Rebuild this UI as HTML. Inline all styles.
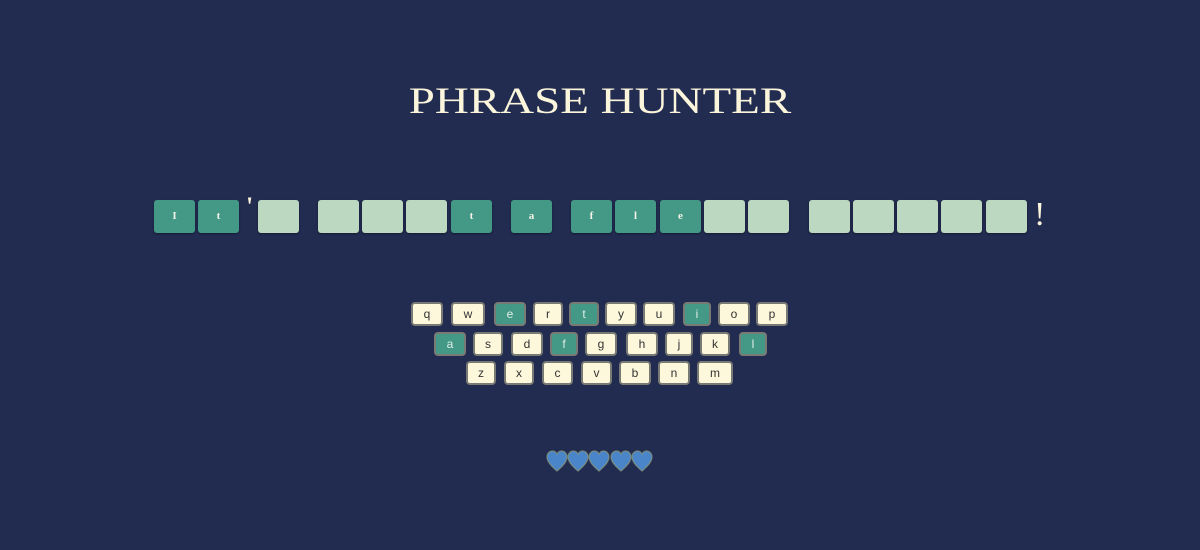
<!DOCTYPE html>
<html><head><style>
body{margin:0;width:1200px;height:550px;background:#222c51;overflow:hidden;position:relative;font-family:"Liberation Sans",sans-serif}
h1{position:absolute;top:80px;left:0;width:1200px;text-align:center;margin:0;font-family:"Liberation Serif",serif;font-weight:normal;font-size:37px;color:#fbf5dc;transform:scaleX(1.27);transform-origin:600px 0}
.t{position:absolute;top:200px;width:41px;height:33px;border-radius:3px;background:#bcd8c1;box-shadow:0 1px 2px rgba(0,0,0,.4);font-family:"Liberation Serif",serif;font-weight:bold;font-size:11px;color:#f2f2e6;text-align:center;line-height:33px}
.s{background:#449886}
.p{position:absolute;top:196px;color:#fbf5dc;font-family:"Liberation Serif",serif;font-size:34px;font-weight:bold}
.k{position:absolute;height:20px;border:2px solid #7a7a74;border-radius:4px;background:#fdf8dc;font-size:12px;color:#333;text-align:center;line-height:20px;box-sizing:content-box}
.k.s{background:#449886;color:#dfeee8}
svg{position:absolute;top:450px;left:545px}
</style></head><body>
<h1>PHRASE HUNTER</h1>
<div class="t s" style="left:154px">I</div>
<div class="t s" style="left:198px">t</div>
<div class="p" style="left:246px;top:192px;font-size:26px">'</div>
<div class="t" style="left:258px"></div>
<div class="t" style="left:318px"></div>
<div class="t" style="left:362px"></div>
<div class="t" style="left:406px"></div>
<div class="t s" style="left:451px">t</div>
<div class="t s" style="left:511px">a</div>
<div class="t s" style="left:571px">f</div>
<div class="t s" style="left:615px">l</div>
<div class="t s" style="left:660px">e</div>
<div class="t" style="left:704px"></div>
<div class="t" style="left:748px"></div>
<div class="t" style="left:809px"></div>
<div class="t" style="left:853px"></div>
<div class="t" style="left:897px"></div>
<div class="t" style="left:941px"></div>
<div class="t" style="left:986px"></div>
<div class="p" style="left:1034px;font-weight:normal">!</div>

<div class="k" style="top:302px;left:411px;width:28px">q</div>
<div class="k" style="top:302px;left:451px;width:30px">w</div>
<div class="k s" style="top:302px;left:494px;width:28px">e</div>
<div class="k" style="top:302px;left:533px;width:26px">r</div>
<div class="k s" style="top:302px;left:569px;width:26px">t</div>
<div class="k" style="top:302px;left:605px;width:28px">y</div>
<div class="k" style="top:302px;left:643px;width:28px">u</div>
<div class="k s" style="top:302px;left:683px;width:24px">i</div>
<div class="k" style="top:302px;left:718px;width:28px">o</div>
<div class="k" style="top:302px;left:756px;width:28px">p</div>

<div class="k s" style="top:332px;left:434px;width:28px">a</div>
<div class="k" style="top:332px;left:473px;width:26px">s</div>
<div class="k" style="top:332px;left:511px;width:28px">d</div>
<div class="k s" style="top:332px;left:550px;width:24px">f</div>
<div class="k" style="top:332px;left:585px;width:28px">g</div>
<div class="k" style="top:332px;left:626px;width:28px">h</div>
<div class="k" style="top:332px;left:665px;width:24px">j</div>
<div class="k" style="top:332px;left:700px;width:26px">k</div>
<div class="k s" style="top:332px;left:739px;width:24px">l</div>

<div class="k" style="top:361px;left:466px;width:26px">z</div>
<div class="k" style="top:361px;left:504px;width:26px">x</div>
<div class="k" style="top:361px;left:542px;width:27px">c</div>
<div class="k" style="top:361px;left:581px;width:27px">v</div>
<div class="k" style="top:361px;left:619px;width:28px">b</div>
<div class="k" style="top:361px;left:658px;width:28px">n</div>
<div class="k" style="top:361px;left:697px;width:32px">m</div>

<svg width="112" height="24" viewBox="0 0 112 24">
<defs><path id="h" d="M11 21 C4 15 1 11 1 7 C1 3.5 3.5 1 6.5 1 C8.5 1 10 2 11 4 C12 2 13.5 1 15.5 1 C18.5 1 21 3.5 21 7 C21 11 18 15 11 21 Z"/></defs>
<g fill="#4a85c9" stroke="#8d9a78" stroke-width="1.2" stroke-opacity=".7">
<use href="#h" x="1"/><use href="#h" x="22"/><use href="#h" x="43"/><use href="#h" x="65"/><use href="#h" x="86"/>
</g></svg>
</body></html>
